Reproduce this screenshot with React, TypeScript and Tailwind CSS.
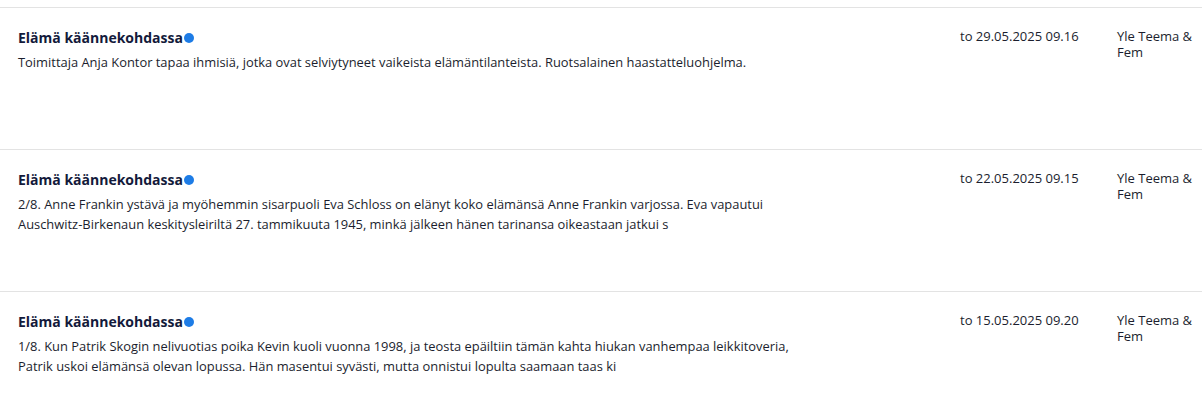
import React from "react";

interface Episode {
  id: string;
  title: string;
  description: string;
  date: string;
  channel: string;
}

const episodes: Episode[] = [
  {
    id: "e3",
    title: "Elämä käännekohdassa",
    description:
      "Toimittaja Anja Kontor tapaa ihmisiä, jotka ovat selviytyneet vaikeista elämäntilanteista. Ruotsalainen haastatteluohjelma.",
    date: "to 29.05.2025 09.16",
    channel: "Yle Teema & Fem",
  },
  {
    id: "e2",
    title: "Elämä käännekohdassa",
    description:
      "2/8. Anne Frankin ystävä ja myöhemmin sisarpuoli Eva Schloss on elänyt koko elämänsä Anne Frankin varjossa. Eva vapautui Auschwitz-Birkenaun keskitysleiriltä 27. tammikuuta 1945, minkä jälkeen hänen tarinansa oikeastaan jatkui s",
    date: "to 22.05.2025 09.15",
    channel: "Yle Teema & Fem",
  },
  {
    id: "e1",
    title: "Elämä käännekohdassa",
    description:
      "1/8. Kun Patrik Skogin nelivuotias poika Kevin kuoli vuonna 1998, ja teosta epäiltiin tämän kahta hiukan vanhempaa leikkitoveria, Patrik uskoi elämänsä olevan lopussa. Hän masentui syvästi, mutta onnistui lopulta saamaan taas ki",
    date: "to 15.05.2025 09.20",
    channel: "Yle Teema & Fem",
  },
];

const EpisodeRow: React.FC<{ episode: Episode }> = ({ episode }) => (
  <div className="flex h-[142px] border-t border-[#e3e3e3] pt-[20px] pl-[18px]">
    <div className="flex-1">
      <div className="flex items-center text-[14px] font-bold leading-[20px] text-[#131a3b]">
        {episode.title}
        <span className="ml-[1px] inline-block h-[10px] w-[10px] rounded-full bg-[#1d7ce6]" />
      </div>
      <p className="mt-[4px] max-w-[800px] text-[12.9px] leading-[20px] text-[#1b1e2e]">
        {episode.description}
      </p>
    </div>
    <div className="w-[157px] text-[13px] leading-[16px] text-[#1b1e2e]">{episode.date}</div>
    <div className="w-[85px] text-[13px] leading-[16px] text-[#1b1e2e]">{episode.channel}</div>
  </div>
);

export default function App() {
  return (
    <div className="h-[405px] overflow-hidden bg-white pt-[7px] font-['Open_Sans',sans-serif]">
      {episodes.map((ep) => (
        <EpisodeRow key={ep.id} episode={ep} />
      ))}
    </div>
  );
}
